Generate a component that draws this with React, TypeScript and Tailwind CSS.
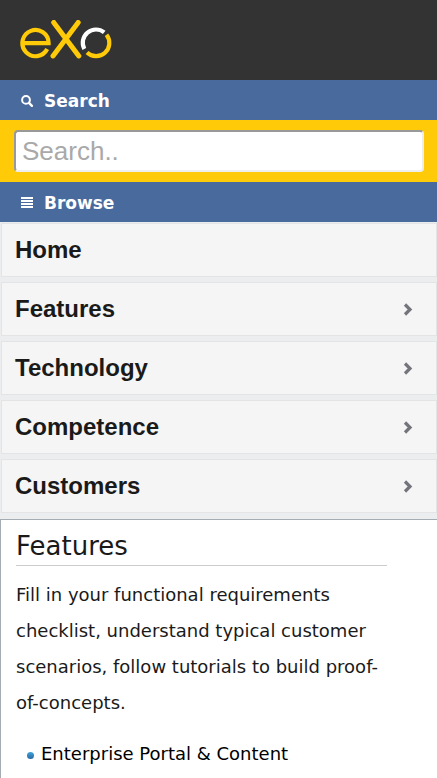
import React from "react";

const menu = [
  { label: "Home", children: false },
  { label: "Features", children: true },
  { label: "Technology", children: true },
  { label: "Competence", children: true },
  { label: "Customers", children: true },
];

function Logo() {
  return (
    <svg width="92" height="40" viewBox="20 20 92 40" fill="none" role="img" aria-label="eXo">
      <g stroke="#ffca08" strokeWidth="4.2">
        <path d="M22.4 43.2H48.6A13.1 13.1 0 1 0 47.2 49" />
        <path d="M53.7 22.4 78.8 55.9M78.2 22.4 53 55.9" strokeWidth="5" strokeLinecap="round" />
        <path d="M106.5 34.8A13.2 13.2 0 0 1 87 52.5" />
      </g>
      <path d="M84.3 48.9A13.2 13.2 0 0 1 104.2 32.4" stroke="#fff" strokeWidth="4.2" />
    </svg>
  );
}

function SearchIcon() {
  return (
    <svg width="13" height="13" viewBox="0 0 13 13" fill="none" stroke="#fff" aria-hidden="true">
      <circle cx="5" cy="4.9" r="3.9" strokeWidth="2" />
      <path d="M8 7.9 10.9 10.8" strokeWidth="2.4" strokeLinecap="round" />
    </svg>
  );
}

function ListIcon() {
  return (
    <svg width="13" height="12" viewBox="0 0 13 12" fill="#fff" aria-hidden="true">
      <path d="M0 0h12v2H0zM0 3h12v2H0zM0 6h12v2H0zM0 9h12v2H0z" />
    </svg>
  );
}

function Chevron() {
  return (
    <svg width="10" height="14" viewBox="0 0 10 14" fill="none" aria-hidden="true">
      <path d="M2 2.5 7 7.5 2 12.5" stroke="#74757c" strokeWidth="3.2" />
    </svg>
  );
}

function BarButton({ icon, label }: { icon: React.ReactNode; label: string }) {
  return (
    <button
      type="button"
      className="flex h-10 w-full items-center gap-2.5 bg-[#496a9d] px-[21px] pt-0.5 text-left text-[17px] font-bold text-white"
    >
      {icon}
      <span className="pt-0.5">{label}</span>
    </button>
  );
}

export default function App() {
  return (
    <div className="flex min-h-screen flex-col bg-[#ecedee] font-['DejaVu_Sans',Verdana,sans-serif] text-[#1a1a1a]">
      <header className="flex h-20 items-center bg-[#333333] px-5">
        <a href="#home">
          <Logo />
        </a>
      </header>
      <BarButton icon={<SearchIcon />} label="Search" />
      <form className="bg-[#ffca08] py-2.5 pr-[13px] pl-3.5">
        <input
          type="search"
          aria-label="Search"
          placeholder="Search.."
          className="block h-[42px] w-full appearance-none rounded border-2 border-t-[#999999] border-r-[#eeeeee] border-b-[#eeeeee] border-l-[#999999] bg-white px-1.5 font-['Liberation_Sans',Arial,sans-serif] text-[26px] text-black placeholder:text-[#a9a9a9]"
        />
      </form>
      <BarButton icon={<ListIcon />} label="Browse" />
      <nav className="pt-px pb-1.5 pl-px">
        <ul className="flex flex-col gap-[5px]">
          {menu.map((item) => (
            <li key={item.label}>
              <a
                href={"#" + item.label.toLowerCase()}
                className="flex h-[54px] items-center justify-between border border-[#e3e4e6] bg-[#f5f5f5] pr-[23px] pl-[13px] font-['Liberation_Sans',Arial,sans-serif] text-2xl font-bold"
              >
                {item.label}
                {item.children && <Chevron />}
              </a>
            </li>
          ))}
        </ul>
      </nav>
      <main className="flex-1 border-t border-l border-[#a5adb2] bg-white pr-[50px] pl-[15px]">
        <h1 className="border-b border-[#cccccc] pt-2 pb-px text-[26px] leading-9">Features</h1>
        <p className="pt-[11px] text-lg leading-9">
          Fill in your functional requirements checklist, understand typical customer scenarios, follow tutorials to
          build proof-of-concepts.
        </p>
        <ul className="pt-[15px] pl-[11px] text-lg leading-9 text-black">
          <li className="flex items-center gap-[7px]">
            <span className="mt-0.5 size-[7px] rounded-full bg-linear-to-b from-[#41a3d8] to-[#2a68a5]" />
            Enterprise Portal &amp; Content
          </li>
        </ul>
      </main>
    </div>
  );
}
